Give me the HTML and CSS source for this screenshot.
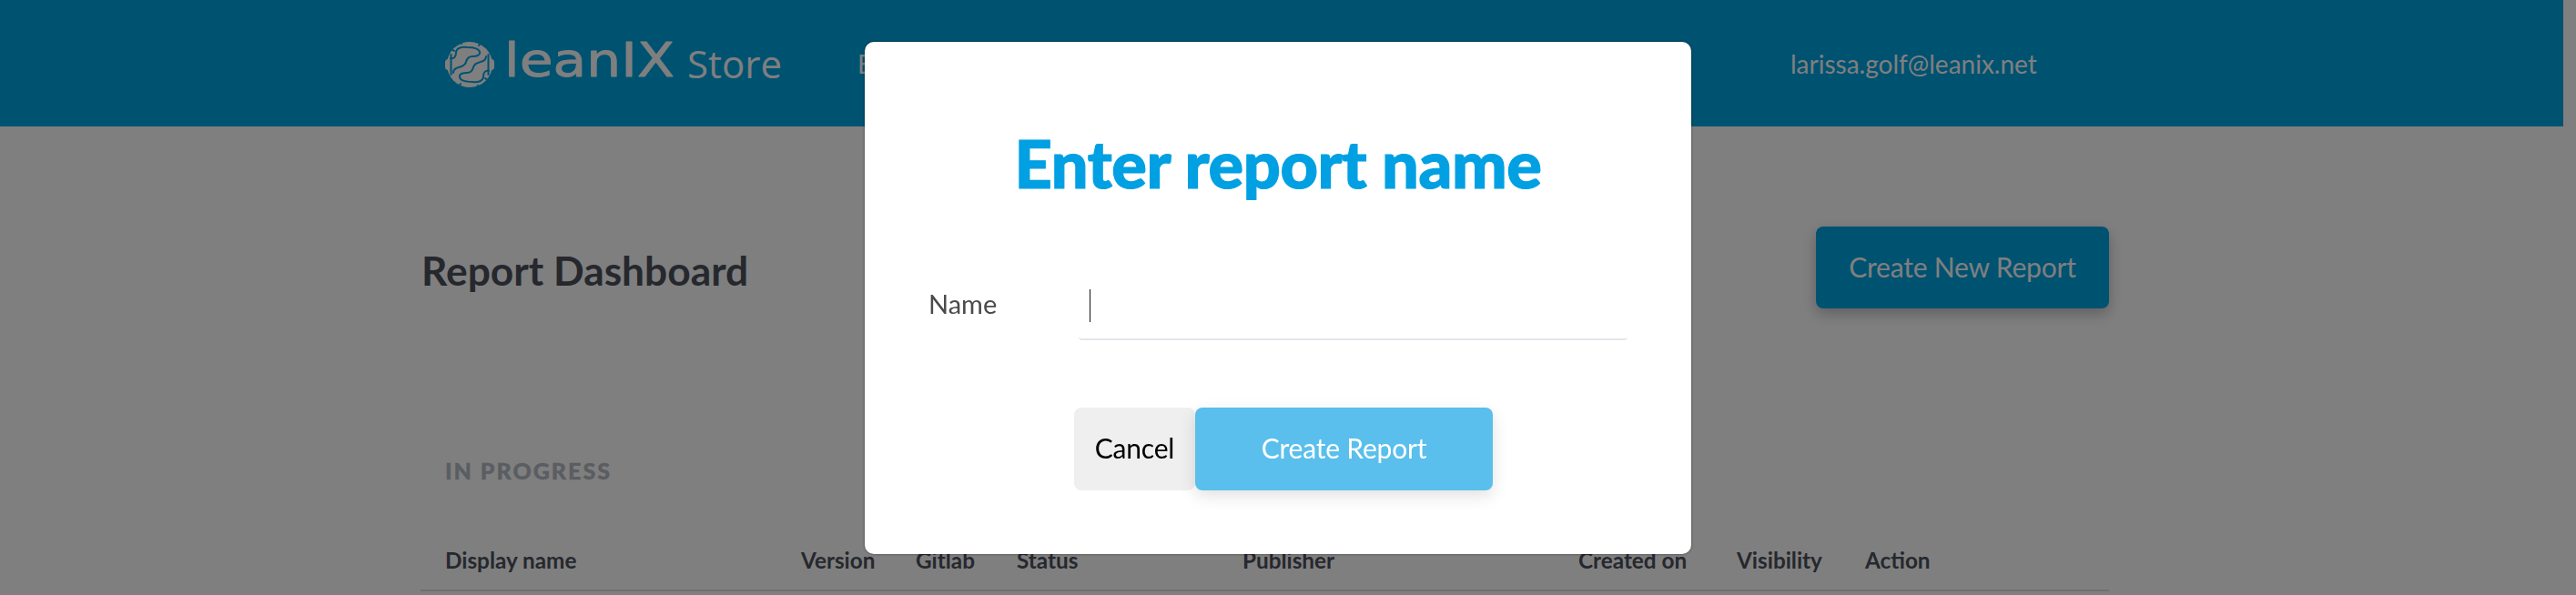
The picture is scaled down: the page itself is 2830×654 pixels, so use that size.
FILE: index.html
```html
<!DOCTYPE html>
<html lang="en">
<head>
<meta charset="utf-8">
<title>leanIX Store</title>
<link rel="stylesheet" href="styles.css">
</head>
<body>
<div class="page">
  <header class="topbar">
    <div class="brand">
      <svg class="mark" viewBox="0 0 54 54" aria-hidden="true">
        <circle class="mark-body" cx="27" cy="27" r="25"/>
        <rect class="mark-body" x="0" y="21" width="7" height="12" rx="3.5"/>
        <rect class="mark-body" x="47" y="21" width="7" height="12" rx="3.5"/>
        <path class="mark-cut" d="M6.500 16V38M47.500 16V38M18 1V4M36 50V53M6 9L10 12M48 45L44 42M40 2L37 6M14 52L17 48"/>
        <path class="mark-cut" d="M6 20C10 21 12 18 12 14C12 9 18 7 24 8C30 8 37 9 38 13C39 17 34 18 30 18C26 18 24 20 23 24C22 28 19 29 15 30C11 31 9 33 9 36"/>
        <path class="mark-cut" transform="rotate(180 27 27)" d="M6 20C10 21 12 18 12 14C12 9 18 7 24 8C30 8 37 9 38 13C39 17 34 18 30 18C26 18 24 20 23 24C22 28 19 29 15 30C11 31 9 33 9 36"/>
      </svg>
      <svg class="wordmark" viewBox="0 0 192 64" role="img" aria-label="leanIX">
        <text class="wordmark-text" x="1" y="50" textLength="187" lengthAdjust="spacingAndGlyphs">leanIX</text>
      </svg>
      <span class="store">Store</span>
    </div>
    <nav class="nav"><a class="nav-link">Explore</a></nav>
    <span class="user">larissa.golf@leanix.net</span>
  </header>

  <main class="content">
    <div class="title-row">
      <h2 class="page-title">Report Dashboard</h2>
      <button class="btn-new">Create New Report</button>
    </div>
    <h3 class="section">IN PROGRESS</h3>
    <div class="table-head">
      <span>Display name</span>
      <span>Version</span>
      <span>Gitlab</span>
      <span>Status</span>
      <span>Publisher</span>
      <span>Created on</span>
      <span>Visibility</span>
      <span>Action</span>
    </div>
  </main>
</div>

<div class="overlay"></div>

<div class="modal">
  <h1 class="modal-title">Enter report name</h1>
  <div class="field">
    <label class="field-label">Name</label>
    <div class="field-input"><span class="caret"></span></div>
  </div>
  <div class="actions">
    <button class="btn-cancel">Cancel</button>
    <button class="btn-create">Create Report</button>
  </div>
</div>
</body>
</html>
```
FILE: styles.css
```css
* { box-sizing: border-box; }
html, body { margin: 0; height: 654px; overflow: hidden; background: #fff; }
body { font-family: Lato, "Open Sans", sans-serif; }
.page { width: 2816px; }

.topbar {
  height: 139px;
  background: #00a4e2;
  color: #fff;
  display: flex;
  align-items: center;
  padding-left: 489px;
}
.brand { display: flex; align-items: center; width: 453px; }
.mark { width: 54px; height: 54px; margin-top: 2px; flex: none; }
.mark-body { fill: #fff; }
.mark-cut { fill: none; stroke: #00a4e2; stroke-width: 2; stroke-linecap: round; stroke-linejoin: round; }
.wordmark { width: 192px; height: 64px; margin: 0 0 7px 10px; flex: none; }
.wordmark-text {
  font-family: "DejaVu Sans", sans-serif;
  font-weight: 400;
  font-size: 51px;
  fill: #fff;
  stroke: #fff;
  stroke-width: .8;
  stroke-linejoin: round;
}
.store { font-family: "Open Sans", sans-serif; font-size: 42px; margin-left: 10px; line-height: 1; }
.nav { width: 1025px; }
.nav-link { font-size: 28px; }
.user { font-size: 28px; }

.content { width: 1855px; margin-left: 462px; }
.title-row { display: flex; justify-content: space-between; padding-top: 110px; height: 200px; }
.page-title { margin: 21px 0 0 1px; font-size: 44.300px; font-weight: 700; line-height: 53px; color: #4c515c; }
.btn-new {
  width: 322px; height: 90px; border: 0; border-radius: 8px;
  background: #00a4e2; color: #fff;
  font: 400 30px Lato, sans-serif; letter-spacing: -.2px;
  padding: 0 0 2px;
  box-shadow: 0 6px 16px rgba(0,0,0,.25);
}
.section {
  margin: 163px 0 0 27px;
  font-size: 25px; font-weight: 900; line-height: 30px;
  letter-spacing: 2px; color: #b4bac4;
  -webkit-text-stroke: .4px #b4bac4;
}
.table-head {
  height: 118px;
  padding: 0 0 17px 27px;
  border-bottom: 2px solid #dedede;
  display: grid;
  grid-template-columns: 391px 126px 111px 248px 369px 174px 141px 1fr;
  align-items: end;
  font-size: 24.300px; font-weight: 700; line-height: 30px;
  color: #4c515c;
}

.overlay { position: fixed; inset: 0; background: rgba(0,0,0,.5); }

.modal {
  position: fixed; left: 950px; top: 46px; width: 908px; height: 563px;
  background: #fff; border-radius: 10px;
  box-shadow: 0 0 3px rgba(0,0,0,.5);
  padding: 90px 70px 0;
}
.modal-title {
  margin: 0; text-align: center;
  font-size: 72px; font-weight: 900; line-height: 86px;
  letter-spacing: -.35px;
  color: #00a0e3;
  -webkit-text-stroke: 1.2px #00a0e3;
}
.field { display: flex; margin-top: 88px; }
.field-label { width: 165px; font-size: 29px; line-height: 48px; color: #4a4a4a; }
.field-input {
  width: 603px; height: 64px; padding: 8px 0 0 12px;
  border-bottom: 2px solid #e4e6ea; border-radius: 0 0 4px 4px;
}
.caret { display: block; width: 1px; height: 36px; background: #111; }
.actions { display: flex; margin: 74px 0 0 160px; }
.btn-cancel, .btn-create {
  height: 91px; border: 0; border-radius: 8px;
  font: 400 30px Lato, sans-serif; padding: 0 0 3px; letter-spacing: -.2px;
}
.btn-cancel { width: 133px; background: #efefef; color: #000; }
.btn-create { width: 327px; background: #5abfec; color: #fff; box-shadow: 0 6px 18px rgba(0,0,0,.12); }
```
